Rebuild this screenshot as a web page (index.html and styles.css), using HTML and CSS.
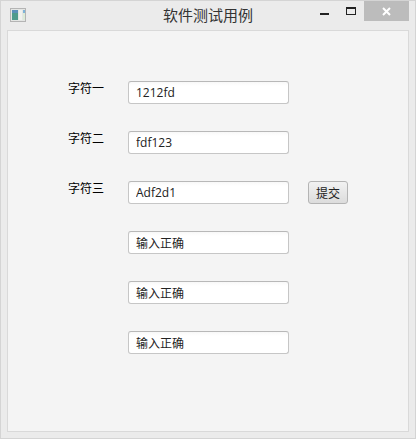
FILE: index.html

```html
<!DOCTYPE html>
<html lang="zh-CN">
<head>
    <meta charset="UTF-8">
    <title>软件测试用例</title>
    <link rel="stylesheet" href="styles.css">
</head>
<body>
    <div class="window">
        <div class="titlebar">
            <svg class="appicon" width="16" height="14" viewBox="0 0 16 14">
                <rect x="0.5" y="0.5" width="15" height="13" fill="#e4e6e4" stroke="#b4b4b4"/>
                <rect x="2" y="2" width="6" height="10" fill="#4f9a8c"/>
                <rect x="2" y="2" width="6" height="3" fill="#5b8fb8"/>
                <rect x="9" y="2" width="3" height="10" fill="#f0f2ee"/>
                <rect x="13" y="2" width="2" height="3" fill="#7fb4d8"/>
                <rect x="13" y="5" width="2" height="7" fill="#dcebd8"/>
            </svg>
            <div class="title">软件测试用例</div>
            <div class="controls">
                <div class="min"></div>
                <div class="max"></div>
                <div class="close">
                    <svg width="9" height="9" viewBox="0 0 9 9">
                        <path d="M1 1L8 8M8 1L1 8" stroke="#fff" stroke-width="2"/>
                    </svg>
                </div>
            </div>
        </div>
        <div class="panel">
            <div class="row">
                <label class="lbl">字符一</label>
                <input class="field" value="1212fd">
            </div>
            <div class="row">
                <label class="lbl">字符二</label>
                <input class="field" value="fdf123">
            </div>
            <div class="row">
                <label class="lbl">字符三</label>
                <input class="field" value="Adf2d1">
                <button class="btn">提交</button>
            </div>
            <div class="row">
                <span class="lbl"></span>
                <input class="field" value="输入正确">
            </div>
            <div class="row">
                <span class="lbl"></span>
                <input class="field" value="输入正确">
            </div>
            <div class="row">
                <span class="lbl"></span>
                <input class="field" value="输入正确">
            </div>
        </div>
    </div>
</body>
</html>
```

FILE: styles.css

```css
*{
    margin: 0;
    padding: 0;
    box-sizing: border-box;
}
html,body{
    width: 100%;
    height: 100%;
    overflow: hidden;
}
body{
    font-family: "Open Sans", "Noto Sans CJK SC", sans-serif;
    font-size: 12px;
    color: #000;
}
.window{
    display: flex;
    flex-direction: column;
    width: 416px;
    height: 439px;
    padding: 0 6px 6px 6px;
    background-color: #ebebeb;
    border: 1px solid #d4d4d4;
}
.titlebar{
    position: relative;
    display: flex;
    height: 29px;
    margin: 0 -6px;
    flex-shrink: 0;
}
.appicon{
    margin: 7px 0 0 9px;
}
.title{
    position: absolute;
    left: 0;
    right: 0;
    top: 4px;
    text-align: center;
    font-size: 15px;
    line-height: 20px;
    color: #333;
}
.controls{
    position: absolute;
    top: 0;
    right: 6px;
    display: flex;
}
.min{
    width: 9px;
    height: 2px;
    margin-top: 12px;
    background-color: #222;
}
.max{
    width: 10px;
    height: 8px;
    margin: 6px 0 0 17px;
    border: 1px solid #222;
    border-top-width: 2px;
}
.close{
    display: flex;
    align-items: center;
    justify-content: center;
    width: 45px;
    height: 20px;
    margin-left: 8px;
    background-color: #bcbcbc;
}
.panel{
    flex: 1;
    padding: 50px 0 0 60px;
    background-color: #f4f4f4;
    border: 1px solid #d9d9d9;
}
.row{
    display: flex;
    height: 50px;
}
.lbl{
    width: 60px;
    font-size: 12px;
    line-height: 15px;
}
.field{
    width: 161px;
    height: 23px;
    padding: 0 7px;
    font-family: "Open Sans", "Noto Sans CJK SC", sans-serif;
    font-size: 12px;
    color: #222;
    background: linear-gradient(#f8f8f8, #fff 4px);
    border: 1px solid #c6c6c6;
    border-top-color: #b8b8b8;
    border-radius: 3px;
    outline: none;
}
.btn{
    width: 40px;
    height: 23px;
    margin-left: 19px;
    font-family: "Open Sans", "Noto Sans CJK SC", sans-serif;
    font-size: 12px;
    color: #222;
    background: linear-gradient(#f2f2f2, #dcdcdc);
    border: 1px solid #b4b4b4;
    border-radius: 3px;
}
```
